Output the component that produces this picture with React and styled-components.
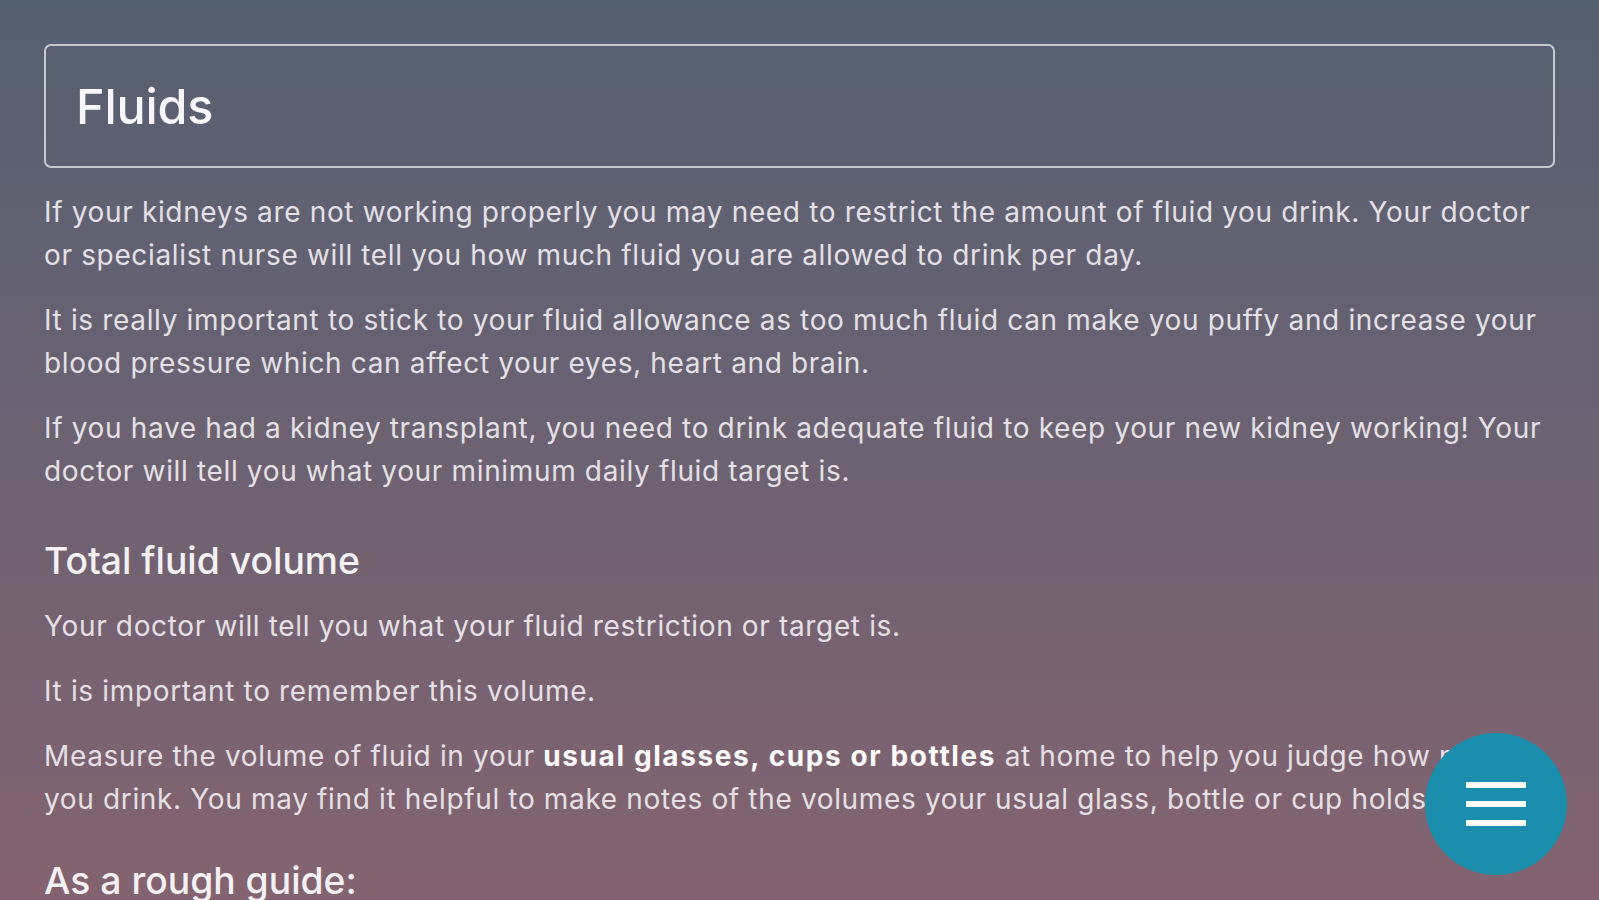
import React from "react";
import styled, { createGlobalStyle } from "styled-components";

const GlobalStyle = createGlobalStyle`
  html, body {
    margin: 0;
    padding: 0;
    height: 100%;
    overflow: hidden;
  }
  body {
    background: linear-gradient(180deg, #556070 0%, #6a6272 45%, #846370 100%);
    font-family: Inter, "Liberation Sans", sans-serif;
  }
`;

const Page = styled.main`
  padding: 44px 44px 0 44px;
  color: #e4e0e5;
`;

const TitleBox = styled.header`
  height: 120px;
  border: 2px solid #c6c9cf;
  border-radius: 7px;
  display: flex;
  align-items: center;
  padding: 0 30px;
  margin-bottom: 23px;
`;

const Title = styled.h1`
  margin: 0;
  font-size: 48.5px;
  font-weight: 500;
  color: #f7f6f8;
  letter-spacing: -0.2px;
`;

const Para = styled.p`
  margin: 0 0 22px 0;
  font-size: 28px;
  line-height: 43px;
  letter-spacing: 0.65px;
`;

const Heading = styled.h2`
  margin: ${(p) => (p.$first ? "44px" : "36px")} 0 20px 0;
  font-size: 37.3px;
  line-height: 48px;
  font-weight: 500;
  color: #f3f1f4;
`;

const Strong = styled.strong`
  font-weight: 700;
  color: #fbfafb;
  letter-spacing: 1.6px;
`;

const Fab = styled.button`
  position: fixed;
  right: 32px;
  bottom: 25px;
  width: 142px;
  height: 142px;
  border-radius: 50%;
  border: none;
  background: #1a8eac;
  display: flex;
  flex-direction: column;
  align-items: center;
  justify-content: center;
  gap: 13px;
  padding: 0;
  cursor: pointer;
`;

const Bar = styled.span`
  display: block;
  width: 60px;
  height: 6px;
  border-radius: 1px;
  background: #ffffff;
`;

export default function App() {
  return (
    <>
      <GlobalStyle />
      <Page>
        <TitleBox>
          <Title>Fluids</Title>
        </TitleBox>
        <Para>
          If your kidneys are not working properly you may need to restrict the amount of fluid you drink. Your doctor
          or specialist nurse will tell you how much fluid you are allowed to drink per day.
        </Para>
        <Para>
          It is really important to stick to your fluid allowance as too much fluid can make you puffy and increase your
          blood pressure which can affect your eyes, heart and brain.
        </Para>
        <Para>
          If you have had a kidney transplant, you need to drink adequate fluid to keep your new kidney working! Your
          doctor will tell you what your minimum daily fluid target is.
        </Para>
        <Heading $first>Total fluid volume</Heading>
        <Para>Your doctor will tell you what your fluid restriction or target is.</Para>
        <Para>It is important to remember this volume.</Para>
        <Para>
          Measure the volume of fluid in your <Strong>usual glasses, cups or bottles</Strong> at home to help you judge how
          much you drink. You may find it helpful to make notes of the volumes your usual glass, bottle or cup holds.
        </Para>
        <Heading>As a rough guide:</Heading>
      </Page>
      <Fab aria-label="Menu">
        <Bar />
        <Bar />
        <Bar />
      </Fab>
    </>
  );
}
